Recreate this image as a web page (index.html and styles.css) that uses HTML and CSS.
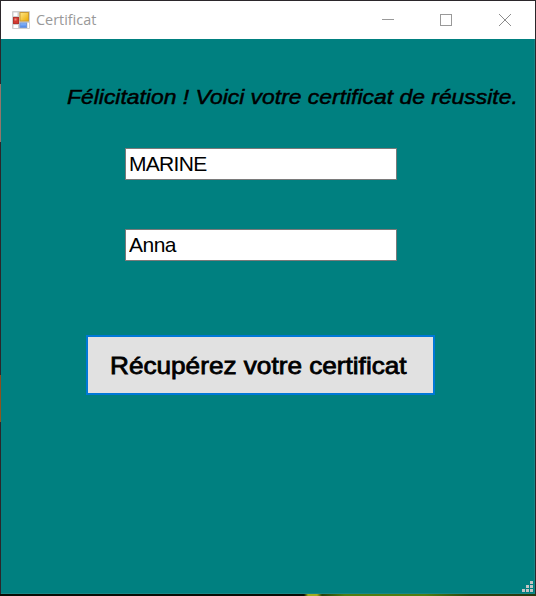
FILE: index.html
```html
<!DOCTYPE html>
<html lang="fr">
<head>
<meta charset="utf-8">
<title>Certificat</title>
<link rel="stylesheet" href="styles.css">
</head>
<body>
<main class="window">
  <header class="titlebar">
    <svg class="app-icon" width="18" height="18" viewBox="0 0 18 18">
      <defs>
        <linearGradient id="gold" x1="0" y1="0" x2="1" y2="1"><stop offset="0" stop-color="#ffe88a"/><stop offset="1" stop-color="#eba900"/></linearGradient>
        <linearGradient id="blue" x1="0" y1="0" x2="0" y2="1"><stop offset="0" stop-color="#8ebcff"/><stop offset="1" stop-color="#4c84e4"/></linearGradient>
      </defs>
      <rect width="18" height="18" rx="1" fill="#cfcfcf"/>
      <path d="M1.500 1.500h4v3.500h-4zM1.500 14h4.500v3h-4.500zM15.500 12h1.500v5h-1.500z" fill="#fff"/>
      <rect x="1.500" y="6.500" width="5" height="6" fill="#d43a32" stroke="#b5342c"/>
      <rect x="2.500" y="7.500" width="2" height="2" fill="#ee8b80"/>
      <rect x="8" y="1.500" width="8.500" height="8.500" fill="url(#gold)" stroke="#c99a35"/>
      <rect x="8" y="12" width="6.500" height="4.500" fill="url(#blue)" stroke="#7199dc"/>
    </svg>
    <span class="title">Certificat</span>
    <svg class="controls" width="130" height="14" viewBox="0 0 130 14" fill="none" stroke="#999" shape-rendering="crispEdges">
      <path d="M0 6.500h12M58.500 1.500h11v11h-11z"/>
      <path d="M117 1l12 12M129 1l-12 12" stroke="#8c8c8c" shape-rendering="auto"/>
    </svg>
  </header>
  <section class="form">
    <h1 class="message"><span class="message-text">Félicitation ! Voici votre certificat de réussite.</span></h1>
    <input class="field field-name" type="text" value="MARINE" aria-label="Nom">
    <input class="field" type="text" value="Anna" aria-label="Prénom">
    <button class="action" type="button"><span class="action-text">Récupérez votre certificat</span></button>
    <svg class="grip" width="11" height="11" viewBox="0 0 11 11" fill="#c4c4c4">
      <path d="M8 0h3v3h-3zM4 4h3v3h-3zM8 4h3v3h-3zM0 8h3v3h-3zM4 8h3v3h-3zM8 8h3v3h-3z"/>
    </svg>
  </section>
</main>
</body>
</html>
```
FILE: styles.css
```css
* { box-sizing: border-box; }
body {
  margin: 0;
  width: 536px;
  height: 596px;
  padding: 1px 1px 2px;
  overflow: hidden;
  font-family: "Liberation Sans", Arial, sans-serif;
  background:
    linear-gradient(#93756b, #93756b) 0 84px / 1px 58px no-repeat,
    linear-gradient(#8b4b20, #8b5a20) 0 375px / 1px 47px no-repeat,
    linear-gradient(90deg, #080c04 0 304px, #a0ad20 308px 317px, #26400a 322px, #507e12 345px 425px, #294610 470px, #28380f) 0 594px / 536px 2px no-repeat,
    #2b272b;
}
.window { height: 593px; display: flex; flex-direction: column; }
.titlebar {
  height: 38px;
  flex: none;
  display: flex;
  align-items: center;
  padding: 0 23px 0 11px;
  background: #fff;
}
.title {
  margin: -2px 0 0 6px;
  font: 15px/20px "Open Sans", sans-serif;
  color: #999;
  transform: scaleX(.96);
  transform-origin: left;
}
.controls { margin-left: auto; }
.form {
  position: relative;
  flex: 1;
  display: flex;
  flex-direction: column;
  background: #008080;
  border: solid #168888;
  border-width: 0 1px 1px 0;
}
.message {
  margin: 45px 0 0 66px;
  height: 25px;
  font: italic 21px/25px "Liberation Sans", Arial, sans-serif;
  white-space: nowrap;
  -webkit-text-stroke: .5px #000;
}
.message-text,
.action-text {
  display: inline-block;
  transform: scaleX(1.09);
  transform-origin: left;
}
.field {
  width: 272px;
  height: 32px;
  margin: 39px 0 0 124px;
  padding: 0 3px;
  border: 1px solid #7a7a7a;
  border-radius: 0;
  outline: 0;
  background: #fff;
  color: #000;
  font: 21px/30px "Liberation Sans", Arial, sans-serif;
  letter-spacing: -.5px;
}
.field-name { letter-spacing: -.7px; }
.field + .field { margin-top: 49px; }
.action {
  width: 349px;
  height: 60px;
  margin: 74px 0 0 85px;
  padding: 2px 0 0 22px;
  border: 2px solid #0078d7;
  border-radius: 0;
  background: #e1e1e1;
  color: #000;
  text-align: left;
  font: 24px/28px "Liberation Sans", Arial, sans-serif;
  white-space: nowrap;
  -webkit-text-stroke: .8px #000;
}
.grip { position: absolute; right: 1px; bottom: 1px; }
```
